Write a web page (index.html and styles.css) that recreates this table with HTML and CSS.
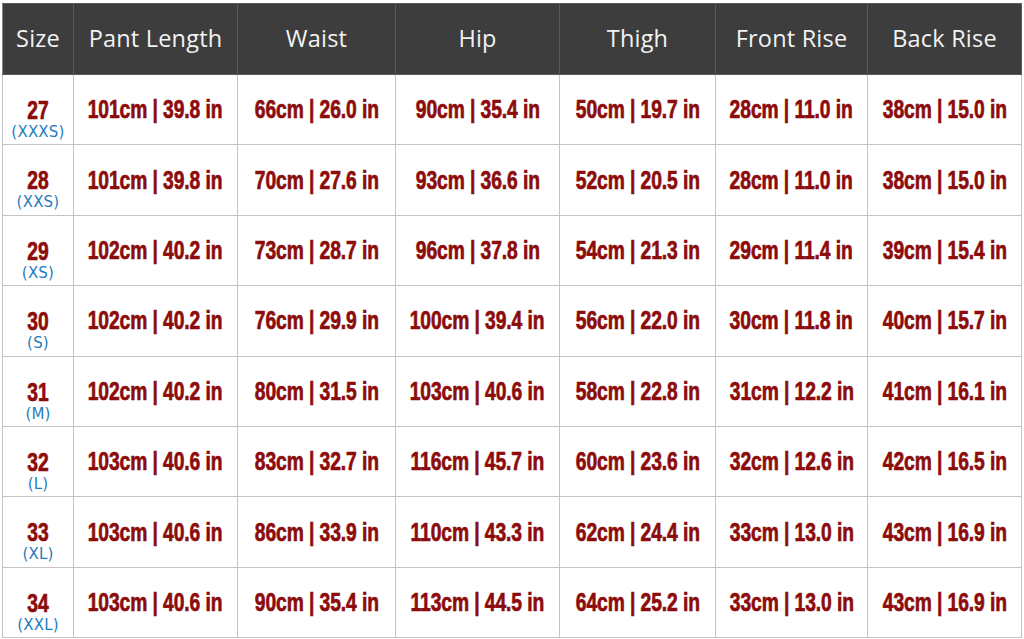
FILE: index.html
```html
<!DOCTYPE html>
<html>
<head>
<meta charset="utf-8">
<link rel="stylesheet" href="styles.css">
</head>
<body>
<table class="chart">
<colgroup>
<col class="c-size"><col class="c-pl"><col class="c-w"><col class="c-hip"><col class="c-th"><col class="c-fr"><col class="c-br">
</colgroup>
<thead>
<tr><th>Size</th><th>Pant Length</th><th>Waist</th><th>Hip</th><th>Thigh</th><th>Front Rise</th><th>Back Rise</th></tr>
</thead>
<tbody>
<tr><td class="sz"><span class="num">27</span><span class="lbl">(XXXS)</span></td><td><span class="v">101cm | 39.8 in</span></td><td><span class="v">66cm | 26.0 in</span></td><td><span class="v">90cm | 35.4 in</span></td><td><span class="v">50cm | 19.7 in</span></td><td><span class="v">28cm | 11.0 in</span></td><td><span class="v">38cm | 15.0 in</span></td></tr>
<tr><td class="sz"><span class="num">28</span><span class="lbl">(XXS)</span></td><td><span class="v">101cm | 39.8 in</span></td><td><span class="v">70cm | 27.6 in</span></td><td><span class="v">93cm | 36.6 in</span></td><td><span class="v">52cm | 20.5 in</span></td><td><span class="v">28cm | 11.0 in</span></td><td><span class="v">38cm | 15.0 in</span></td></tr>
<tr><td class="sz"><span class="num">29</span><span class="lbl">(XS)</span></td><td><span class="v">102cm | 40.2 in</span></td><td><span class="v">73cm | 28.7 in</span></td><td><span class="v">96cm | 37.8 in</span></td><td><span class="v">54cm | 21.3 in</span></td><td><span class="v">29cm | 11.4 in</span></td><td><span class="v">39cm | 15.4 in</span></td></tr>
<tr><td class="sz"><span class="num">30</span><span class="lbl">(S)</span></td><td><span class="v">102cm | 40.2 in</span></td><td><span class="v">76cm | 29.9 in</span></td><td><span class="v">100cm | 39.4 in</span></td><td><span class="v">56cm | 22.0 in</span></td><td><span class="v">30cm | 11.8 in</span></td><td><span class="v">40cm | 15.7 in</span></td></tr>
<tr><td class="sz"><span class="num">31</span><span class="lbl">(M)</span></td><td><span class="v">102cm | 40.2 in</span></td><td><span class="v">80cm | 31.5 in</span></td><td><span class="v">103cm | 40.6 in</span></td><td><span class="v">58cm | 22.8 in</span></td><td><span class="v">31cm | 12.2 in</span></td><td><span class="v">41cm | 16.1 in</span></td></tr>
<tr><td class="sz"><span class="num">32</span><span class="lbl">(L)</span></td><td><span class="v">103cm | 40.6 in</span></td><td><span class="v">83cm | 32.7 in</span></td><td><span class="v">116cm | 45.7 in</span></td><td><span class="v">60cm | 23.6 in</span></td><td><span class="v">32cm | 12.6 in</span></td><td><span class="v">42cm | 16.5 in</span></td></tr>
<tr><td class="sz"><span class="num">33</span><span class="lbl">(XL)</span></td><td><span class="v">103cm | 40.6 in</span></td><td><span class="v">86cm | 33.9 in</span></td><td><span class="v">110cm | 43.3 in</span></td><td><span class="v">62cm | 24.4 in</span></td><td><span class="v">33cm | 13.0 in</span></td><td><span class="v">43cm | 16.9 in</span></td></tr>
<tr><td class="sz"><span class="num">34</span><span class="lbl">(XXL)</span></td><td><span class="v">103cm | 40.6 in</span></td><td><span class="v">90cm | 35.4 in</span></td><td><span class="v">113cm | 44.5 in</span></td><td><span class="v">64cm | 25.2 in</span></td><td><span class="v">33cm | 13.0 in</span></td><td><span class="v">43cm | 16.9 in</span></td></tr>
</tbody>
</table>
</body>
</html>
```
FILE: styles.css
```css
html, body { margin: 0; padding: 0; background: #ffffff; }
body { padding: 3px 0 0 2px; }
.chart {
  border-collapse: collapse;
  table-layout: fixed;
  width: 1019px;
}
.c-size { width: 71px; }
.c-pl { width: 164px; }
.c-w { width: 158px; }
.c-hip { width: 164px; }
.c-th { width: 156px; }
.c-fr { width: 152px; }
.c-br { width: 154px; }
.chart th {
  background: #3d3d3d;
  color: #f2f2f2;
  font-family: "Open Sans", "DejaVu Sans", sans-serif;
  font-weight: 400;
  font-size: 23.5px;
  letter-spacing: 0.2px;
  height: 67px;
  padding: 0 0 3px 0;
  border: 1px solid #5a5a5a;
  border-left-color: #888;
  text-align: center;
  vertical-align: middle;
}
.chart td {
  height: 69.4px;
  padding: 0;
  border: 1px solid #c4c4c4;
  text-align: center;
  vertical-align: middle;
  color: #8c0b0b;
  font-family: "Liberation Sans", Arial, sans-serif;
  font-weight: 700;
  font-size: 26px;
  white-space: nowrap;
}
.v, .num {
  display: inline-block;
  transform: scaleX(0.74);
  margin: 0 -30px;
  letter-spacing: -0.1px;
  -webkit-text-stroke: 0.7px #8c0b0b;
}
.chart td.sz { padding-top: 23px; height: 46.4px; vertical-align: top; }
.num { display: block; line-height: 24px; margin: 0; }
.lbl {
  display: block;
  color: #1f7cbd;
  font-family: "DejaVu Sans", "Open Sans", sans-serif;
  font-weight: 400;
  font-size: 15px;
  letter-spacing: 0.2px;
  line-height: 20px;
}
```
